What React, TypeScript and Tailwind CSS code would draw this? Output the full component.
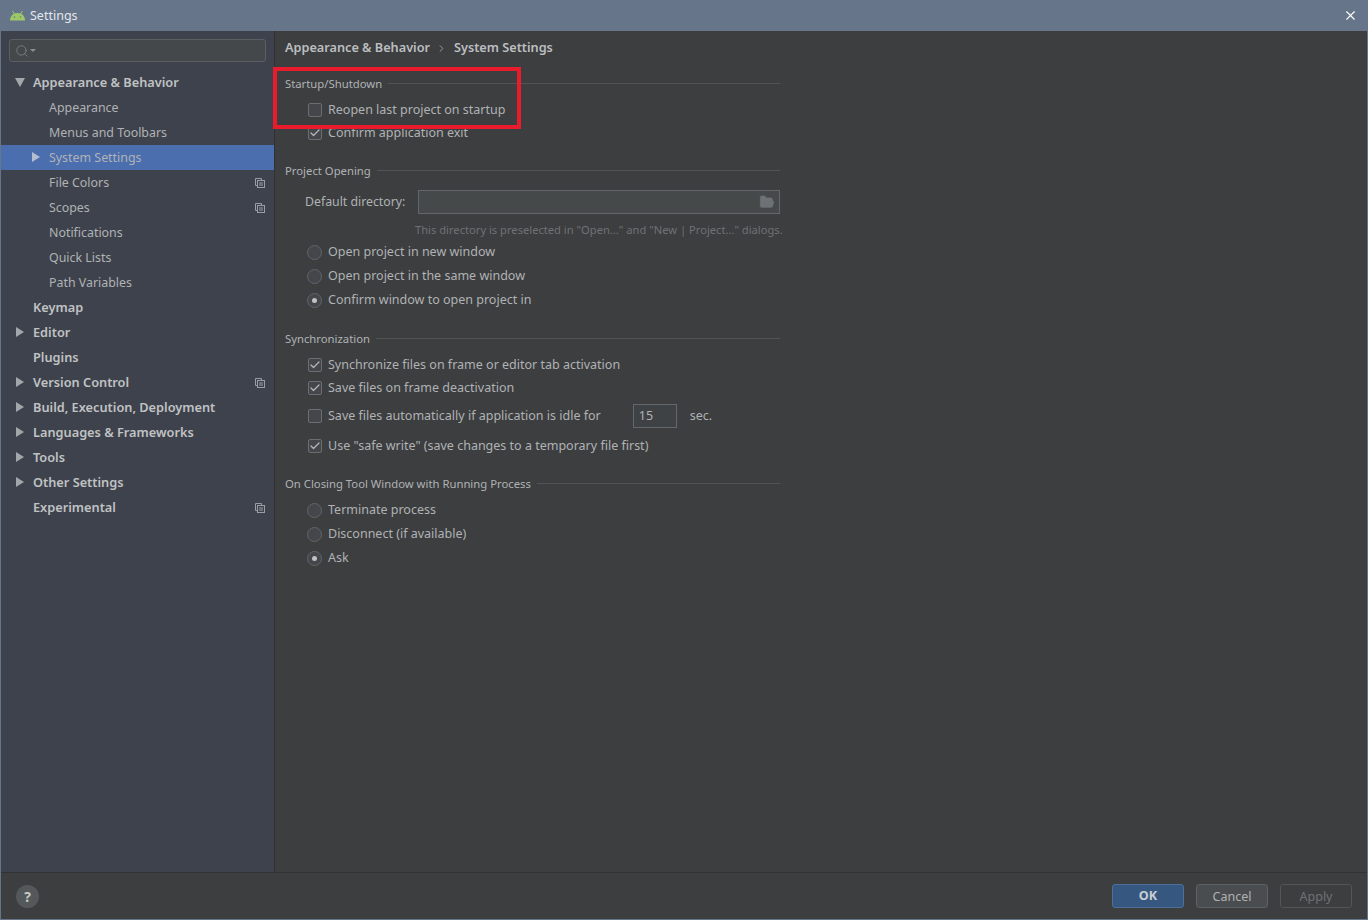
import { Check, ChevronRight, FolderOpen, Search, X } from "lucide-react";

const font = { fontFamily: '"Noto Sans", "Open Sans", sans-serif' };

const navItems = [
  { label: "Appearance & Behavior", bold: true, arrow: "down" },
  { label: "Appearance" },
  { label: "Menus and Toolbars" },
  { label: "System Settings", arrow: "sub", selected: true },
  { label: "File Colors", copy: true },
  { label: "Scopes", copy: true },
  { label: "Notifications" },
  { label: "Quick Lists" },
  { label: "Path Variables" },
  { label: "Keymap", bold: true },
  { label: "Editor", bold: true, arrow: "right" },
  { label: "Plugins", bold: true },
  { label: "Version Control", bold: true, arrow: "right", copy: true },
  { label: "Build, Execution, Deployment", bold: true, arrow: "right" },
  { label: "Languages & Frameworks", bold: true, arrow: "right" },
  { label: "Tools", bold: true, arrow: "right" },
  { label: "Other Settings", bold: true, arrow: "right" },
  { label: "Experimental", bold: true, copy: true },
];

function AndroidLogo() {
  return (
    <svg width="17" height="11" viewBox="0 0 17 11" className="shrink-0">
      <path d="M1 10.5C1 6 4 3 8.5 3S16 6 16 10.5Z" fill="#9cc86a" />
      <path d="M3.5 1 5.5 4M13.5 1l-2 3" stroke="#9cc86a" strokeWidth="1" />
      <circle cx="5.5" cy="7" r="0.8" fill="#667589" />
      <circle cx="11.5" cy="7" r="0.8" fill="#667589" />
    </svg>
  );
}

function CopyIcon() {
  return (
    <svg width="10" height="10" viewBox="0 0 10 10" fill="none" stroke="#9a9da3" strokeWidth="1">
      <path d="M2.5 7.5H.5V.5h6v2" />
      <rect x="2.5" y="2.5" width="7" height="7" />
      <path d="M4 5h4M4 7h4" />
    </svg>
  );
}

function NavRow({ item }: { item: (typeof navItems)[number] }) {
  return (
    <div className={`relative h-[25px] flex items-center pr-[9px] ${item.selected ? "bg-[#4b6eaf]" : ""} ${item.bold ? "pl-[32px]" : "pl-[48px]"}`}>
      {item.arrow === "down" && (
        <span className="absolute left-[14px] top-[8px] w-0 h-0 border-x-[5px] border-x-transparent border-t-[9px] border-t-[#a3a6aa]" />
      )}
      {item.arrow === "right" && (
        <span className="absolute left-[15px] top-[7px] w-0 h-0 border-y-[5px] border-y-transparent border-l-[8px] border-l-[#a3a6aa]" />
      )}
      {item.arrow === "sub" && (
        <span className="absolute left-[31px] top-[7px] w-0 h-0 border-y-[5px] border-y-transparent border-l-[8px] border-l-[#b4bdcf]" />
      )}
      <span className={`flex-1 ${item.bold ? "text-[12.75px] font-semibold text-[#c0c2c4]" : "pt-[2px] text-[12.4px] text-[#b0b2b4]"}`}>{item.label}</span>
      {item.copy && <CopyIcon />}
    </div>
  );
}

function SectionTitle({ title, className }: { title: string; className: string }) {
  return (
    <div className={`flex items-center gap-[6px] h-[20px] ${className}`}>
      <span className="text-[11.3px] text-[#b0b2b4] whitespace-nowrap">{title}</span>
      <div className="flex-1 h-px bg-[#515355] -mt-[1px]" />
    </div>
  );
}

function CheckRow({ label, checked, className = "" }: { label: string; checked?: boolean; className?: string }) {
  return (
    <div className={`flex items-center gap-[6px] h-[20px] pl-[23px] ${className}`}>
      <span className="w-[14px] h-[14px] rounded-[2px] border border-[#6b6e70] bg-[#43464a] flex items-center justify-center">
        {checked && <Check size={12} strokeWidth={2.5} className="text-[#b4b6b8]" />}
      </span>
      <span className="text-[12.5px] text-[#b0b2b4] whitespace-nowrap">{label}</span>
    </div>
  );
}

function RadioRow({ label, checked, className = "" }: { label: string; checked?: boolean; className?: string }) {
  return (
    <div className={`flex items-center gap-[6px] h-[20px] pl-[22px] ${className}`}>
      <span className="w-[15px] h-[15px] rounded-full border border-[#626567] bg-[#43464a] flex items-center justify-center">
        {checked && <span className="w-[5px] h-[5px] rounded-full bg-[#bfc1c3]" />}
      </span>
      <span className="text-[12.5px] text-[#b0b2b4] whitespace-nowrap">{label}</span>
    </div>
  );
}

export default function App() {
  return (
    <div className="w-[1368px] h-[920px] flex flex-col overflow-hidden bg-[#667589] relative" style={font}>
      {/* Title bar */}
      <div className="h-[31px] shrink-0 flex items-center pl-[9px] pr-[10px]">
        <AndroidLogo />
        <span className="ml-[4px] pt-[2px] text-[12.5px] text-[#e3e6ea]">Settings</span>
        <X size={15} strokeWidth={1.8} className="ml-auto text-white" />
      </div>

      <div className="flex-1 flex flex-col mx-px mb-px bg-[#3c3e40] min-h-0">
        <div className="flex-1 flex min-h-0">
          {/* Sidebar */}
          <aside className="w-[274px] shrink-0 bg-[#3e424c] border-r border-[#2f3133]">
            <div className="mx-[8px] mt-[8px] mb-[8px] h-[23px] rounded-[3px] border border-[#5c5f61] bg-[#45484a] flex items-center pl-[5px] text-[#8b8e91]">
              <Search size={14} strokeWidth={1.2} />
              <span className="ml-px w-0 h-0 border-x-[3px] border-x-transparent border-t-[3px] border-t-[#8b8e91]" />
            </div>
            {navItems.map((item) => (
              <NavRow key={item.label} item={item} />
            ))}
          </aside>

          {/* Main panel */}
          <main className="flex-1 pl-[10px] pt-[7px]">
            <div className="flex items-center h-[20px] text-[12.7px] font-semibold text-[#bcbec0]">
              <span>Appearance &amp; Behavior</span>
              <ChevronRight size={11} className="ml-[6px] mr-[7px] text-[#a0a2a4]" />
              <span>System Settings</span>
            </div>

            <div className="w-[495px]">
              <SectionTitle title="Startup/Shutdown" className="mt-[16px]" />
              <CheckRow label="Reopen last project on startup" className="mt-[6px]" />
              <CheckRow label="Confirm application exit" checked className="mt-[3px]" />

              <SectionTitle title="Project Opening" className="mt-[18px]" />
              <div className="flex items-center mt-[9px] pl-[20px]">
                <span className="w-[113px] text-[12.3px] text-[#b0b2b4]">Default directory:</span>
                <div className="flex-1 h-[24px] border border-[#646769] bg-[#45494a] flex items-center justify-end pr-[4px]">
                  <FolderOpen size={16} fill="#6e7275" strokeWidth={1} className="text-[#6e7275]" />
                </div>
              </div>
              <div className="mt-[7px] pl-[130px] h-[18px] text-[11.17px] leading-[18px] text-[#6f7274] whitespace-nowrap">
                This directory is preselected in "Open..." and "New | Project..." dialogs.
              </div>
              <RadioRow label="Open project in new window" className="mt-[3px]" />
              <RadioRow label="Open project in the same window" className="mt-[4px]" />
              <RadioRow label="Confirm window to open project in" checked className="mt-[4px]" />

              <SectionTitle title="Synchronization" className="mt-[19px]" />
              <CheckRow label="Synchronize files on frame or editor tab activation" checked className="mt-[6px]" />
              <CheckRow label="Save files on frame deactivation" checked className="mt-[3px]" />
              <div className="flex items-center mt-[5px] h-[26px]">
                <CheckRow label="Save files automatically if application is idle for" />
                <div className="ml-[32px] w-[44px] h-[24px] border border-[#646769] bg-[#3f4244] text-[12.5px] text-[#b0b2b4] pl-[5px] leading-[22px]">15</div>
                <span className="ml-[13px] text-[12.5px] text-[#b0b2b4]">sec.</span>
              </div>
              <CheckRow label={'Use "safe write" (save changes to a temporary file first)'} checked className="mt-[7px]" />

              <SectionTitle title="On Closing Tool Window with Running Process" className="mt-[18px]" />
              <RadioRow label="Terminate process" className="mt-[6px]" />
              <RadioRow label="Disconnect (if available)" className="mt-[4px]" />
              <RadioRow label="Ask" checked className="mt-[4px]" />
            </div>
          </main>
        </div>

        {/* Footer */}
        <footer className="h-[47px] shrink-0 border-t border-[#323232] flex items-center pl-[15px] pr-[15px]">
          <div className="w-[23px] h-[23px] rounded-full bg-[#54585a] flex items-center justify-center text-[14px] font-bold text-[#c6c8ca]">?</div>
          <div className="ml-auto flex gap-[12px]">
            <button className="w-[72px] h-[24px] rounded-[3px] border border-[#4c7097] bg-[#365880] text-[12.6px] font-bold text-[#c8ced4]">OK</button>
            <button className="w-[72px] h-[24px] pt-[2px] rounded-[3px] border border-[#5e6163] bg-[#4a4d4f] text-[12.5px] text-[#b0b2b4]">Cancel</button>
            <button className="w-[72px] h-[24px] pt-[2px] rounded-[3px] border border-[#535557] text-[12.5px] text-[#6f7274]">Apply</button>
          </div>
        </footer>
      </div>

      {/* Red annotation frame */}
      <div className="absolute left-[273px] top-[67px] w-[248px] h-[62px] border-[4px] border-[#e81c2c]" />
    </div>
  );
}
